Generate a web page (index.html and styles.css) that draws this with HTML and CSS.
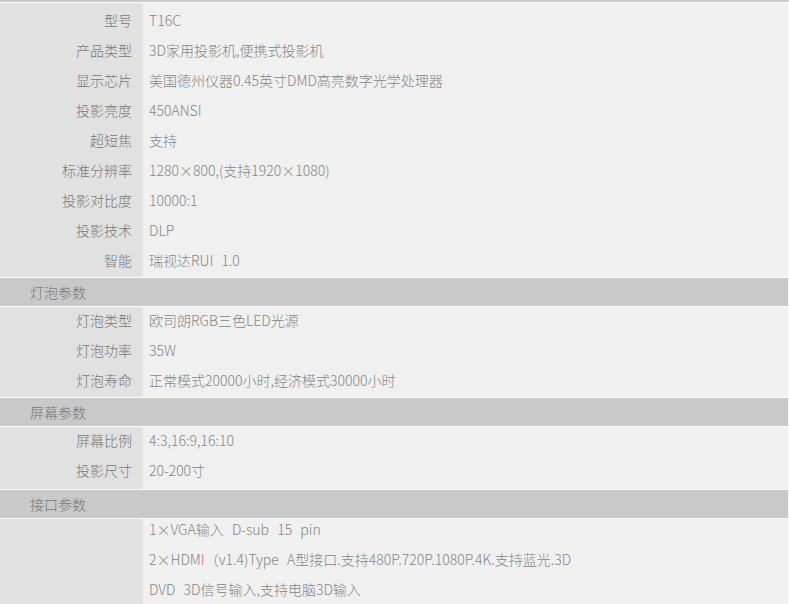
FILE: index.html
```html
<!DOCTYPE html>
<html lang="zh-CN">
<head>
  <meta charset="UTF-8" />
  <title>T16C 规格参数</title>
  <link rel="stylesheet" href="styles.css">
</head>
<body>
  <div class="spec">
    <div class="sec first">
      <div class="row"><div class="name">型号</div><div class="val">T16C</div></div>
      <div class="row"><div class="name">产品类型</div><div class="val">3D家用投影机,便携式投影机</div></div>
      <div class="row"><div class="name">显示芯片</div><div class="val">美国德州仪器0.45英寸DMD高亮数字光学处理器</div></div>
      <div class="row"><div class="name">投影亮度</div><div class="val">450ANSI</div></div>
      <div class="row"><div class="name">超短焦</div><div class="val">支持</div></div>
      <div class="row"><div class="name">标准分辨率</div><div class="val">1280×800,(支持1920×1080)</div></div>
      <div class="row"><div class="name">投影对比度</div><div class="val">10000:1</div></div>
      <div class="row"><div class="name">投影技术</div><div class="val">DLP</div></div>
      <div class="row"><div class="name">智能</div><div class="val">瑞视达RUI  1.0</div></div>
    </div>

    <div class="group">灯泡参数</div>
    <div class="sec">
      <div class="row"><div class="name">灯泡类型</div><div class="val">欧司朗RGB三色LED光源</div></div>
      <div class="row"><div class="name">灯泡功率</div><div class="val">35W</div></div>
      <div class="row"><div class="name">灯泡寿命</div><div class="val">正常模式20000小时,经济模式30000小时</div></div>
    </div>

    <div class="group">屏幕参数</div>
    <div class="sec spaced">
      <div class="row"><div class="name">屏幕比例</div><div class="val">4:3,16:9,16:10</div></div>
      <div class="row"><div class="name">投影尺寸</div><div class="val">20-200寸</div></div>
    </div>

    <div class="group">接口参数</div>
    <div class="sec">
      <div class="row tall">
        <div class="name"></div>
        <div class="val lines">
          <p>1×VGA输入  D-sub  15  pin</p>
          <p>2×HDMI（v1.4)Type  A型接口.支持480P.720P.1080P.4K.支持蓝光.3D</p>
          <p>DVD  3D信号输入,支持电脑3D输入</p>
        </div>
      </div>
    </div>
  </div>
</body>
</html>
```

FILE: styles.css
```css
:root {
  --name-bg: #e1e1e1;
  --val-bg:  #f0f0f0;
  --head-bg: #c9c9c9;
  --line:    #fafafa;
  --name:    #777;
  --text:    #858585;
}

* { margin: 0; padding: 0; box-sizing: border-box; }

html, body {
  background: var(--val-bg);
  font-family: "Noto Sans CJK SC", "Noto Sans", sans-serif;
  font-weight: 300;
  font-size: 14px;
  color: var(--text);
}

.spec {
  width: 789px;
  border-top: 2px solid var(--head-bg);
  border-right: 1px solid var(--line);
}

.sec {
  border-top: 1px solid var(--line);
  background: linear-gradient(to right, var(--name-bg) 143px, var(--val-bg) 143px);
}

.sec.first { padding-top: 4px; }
.sec.spaced { padding-bottom: 2px; }

.row {
  display: flex;
  height: 30px;
  line-height: 26px;
}

.name {
  width: 143px;
  flex-shrink: 0;
  text-align: right;
  padding-right: 11px;
  color: var(--name);
}

.val {
  flex: 1;
  padding-left: 6px;
  white-space: pre;
  word-spacing: 1px;
}

.row.tall { height: auto; }
.val.lines { white-space: normal; }
.val.lines p {
  height: 30px;
  line-height: 20px;
  white-space: pre;
}

.group {
  border-top: 1px solid var(--line);
  height: 29px;
  line-height: 28px;
  padding-left: 30px;
  background: var(--head-bg);
  color: var(--name);
}
```
